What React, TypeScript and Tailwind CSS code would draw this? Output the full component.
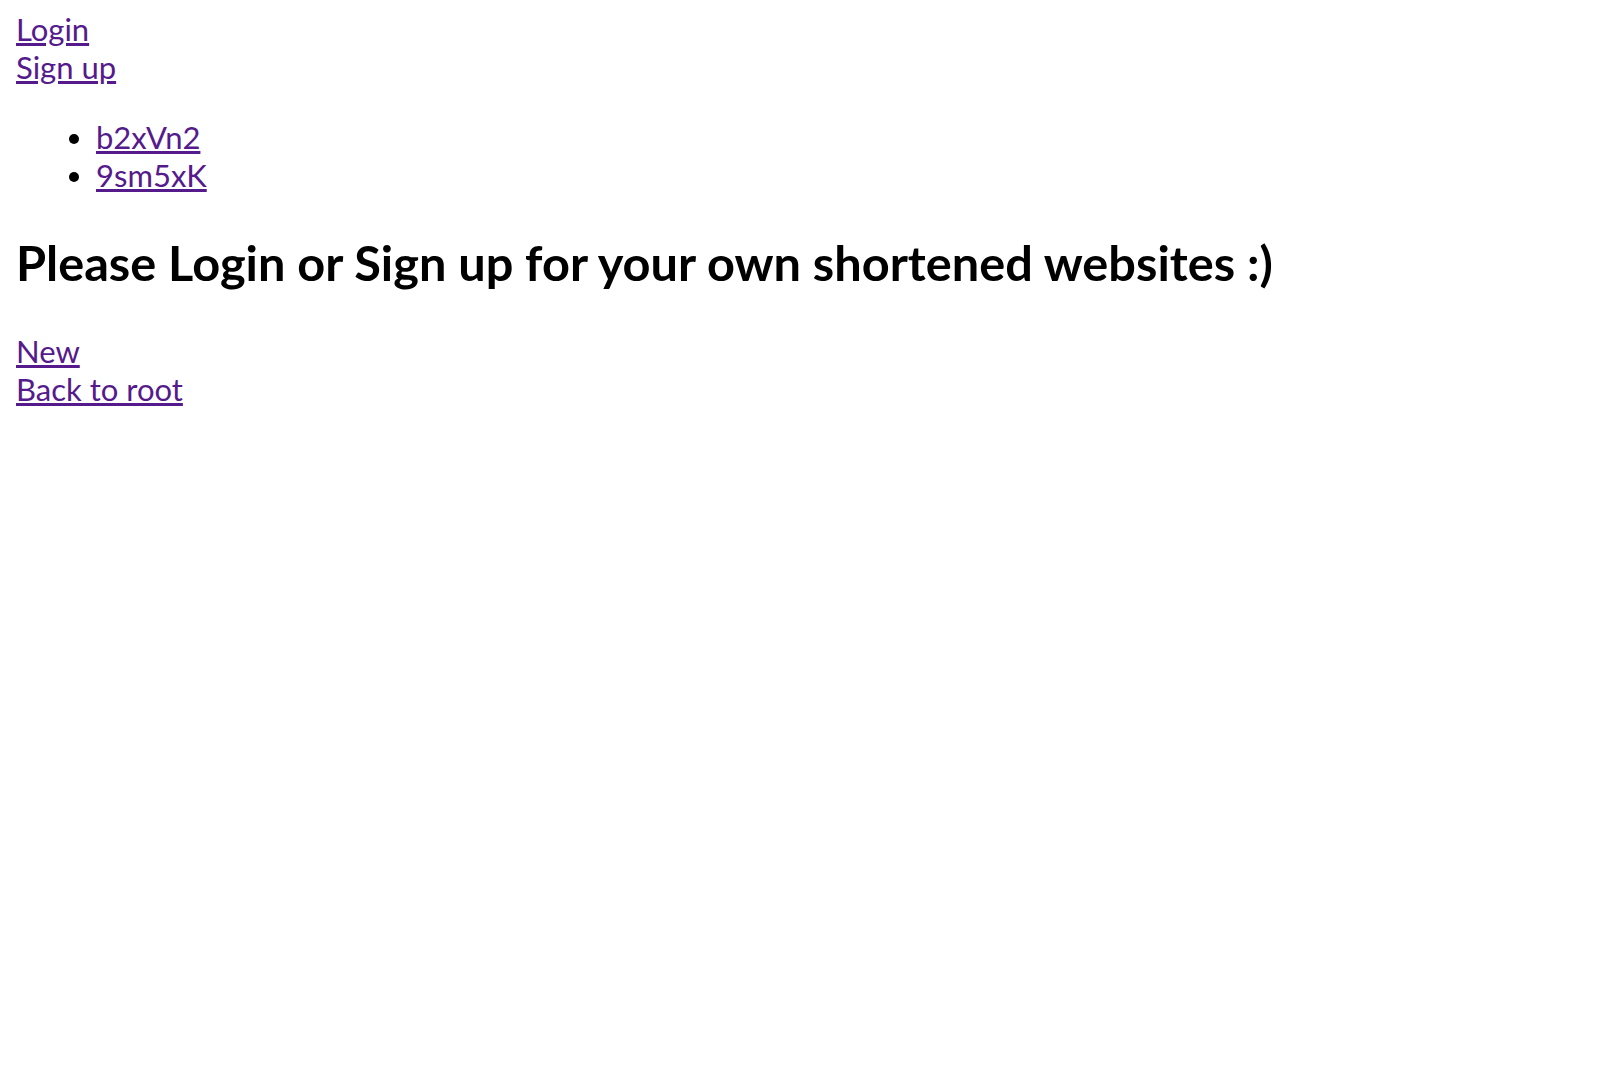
export default function App() {
  const links = ["b2xVn2", "9sm5xK"];
  return (
    <div className="min-h-screen bg-white px-4 pt-[10px] pb-4 font-['Lato',sans-serif] text-[31px] leading-[38px] text-black">
      <div className="flex flex-col items-start">
        <a href="#" className="text-[#551a8b] underline">
          Login
        </a>
        <a href="#" className="text-[#551a8b] underline">
          Sign up
        </a>
      </div>
      <ul className="my-8 list-disc pl-20">
        {links.map((code) => (
          <li key={code}>
            <a href="#" className="text-[#551a8b] underline">
              {code}
            </a>
          </li>
        ))}
      </ul>
      <h1 className="mt-[40px] mb-[42px] text-[48.7px] leading-[56px] font-bold">
        Please Login or Sign up for your own shortened websites :)
      </h1>
      <div className="flex flex-col items-start">
        <a href="#" className="text-[#551a8b] underline">
          New
        </a>
        <a href="#" className="text-[#551a8b] underline">
          Back to root
        </a>
      </div>
    </div>
  );
}
